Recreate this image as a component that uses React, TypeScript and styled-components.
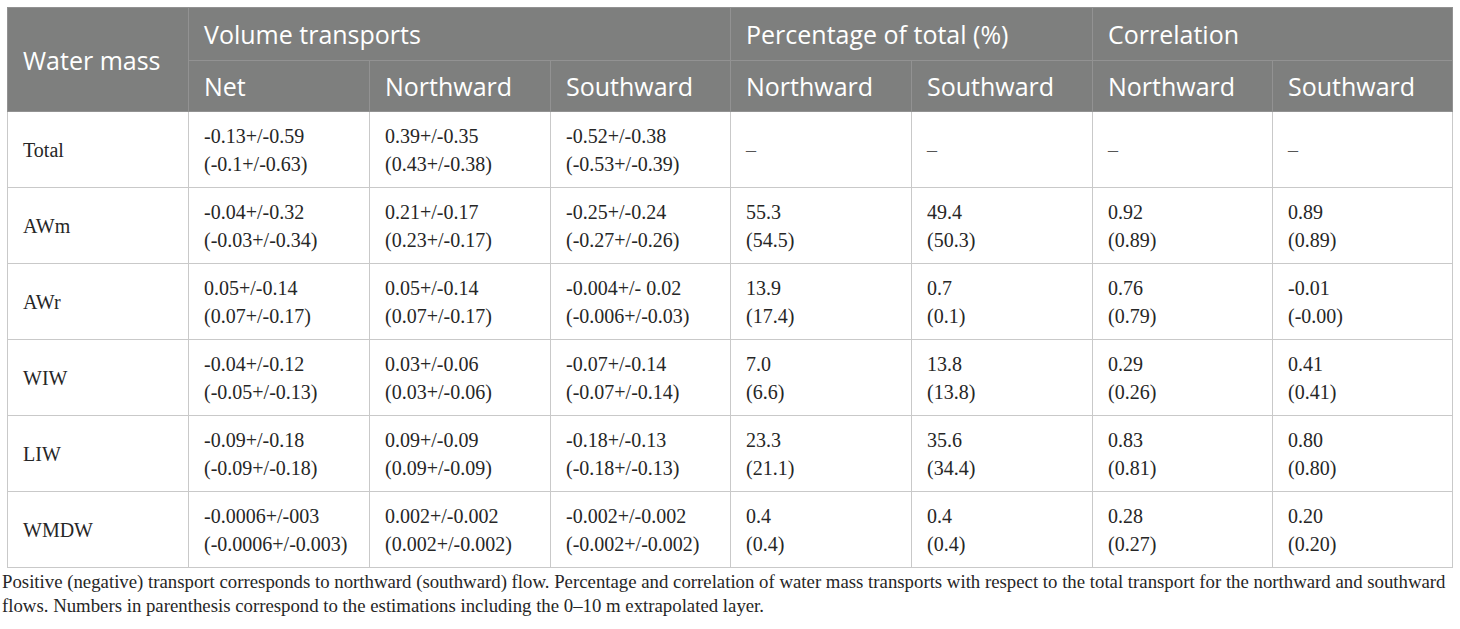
import React from 'react';
import styled, { createGlobalStyle } from 'styled-components';

const GlobalStyle = createGlobalStyle`
  html, body {
    margin: 0;
    padding: 0;
    background: #ffffff;
  }
`;

// column widths measured from the reference
const columnWidths = [181, 181, 181, 180, 181, 181, 180, 180];

type Row = {
  name: string;
  cells: [string, string][];
};

const rows: Row[] = [
  {
    name: 'Total',
    cells: [
      ['-0.13+/-0.59', '(-0.1+/-0.63)'],
      ['0.39+/-0.35', '(0.43+/-0.38)'],
      ['-0.52+/-0.38', '(-0.53+/-0.39)'],
      ['–', ''],
      ['–', ''],
      ['–', ''],
      ['–', ''],
    ],
  },
  {
    name: 'AWm',
    cells: [
      ['-0.04+/-0.32', '(-0.03+/-0.34)'],
      ['0.21+/-0.17', '(0.23+/-0.17)'],
      ['-0.25+/-0.24', '(-0.27+/-0.26)'],
      ['55.3', '(54.5)'],
      ['49.4', '(50.3)'],
      ['0.92', '(0.89)'],
      ['0.89', '(0.89)'],
    ],
  },
  {
    name: 'AWr',
    cells: [
      ['0.05+/-0.14', '(0.07+/-0.17)'],
      ['0.05+/-0.14', '(0.07+/-0.17)'],
      ['-0.004+/- 0.02', '(-0.006+/-0.03)'],
      ['13.9', '(17.4)'],
      ['0.7', '(0.1)'],
      ['0.76', '(0.79)'],
      ['-0.01', '(-0.00)'],
    ],
  },
  {
    name: 'WIW',
    cells: [
      ['-0.04+/-0.12', '(-0.05+/-0.13)'],
      ['0.03+/-0.06', '(0.03+/-0.06)'],
      ['-0.07+/-0.14', '(-0.07+/-0.14)'],
      ['7.0', '(6.6)'],
      ['13.8', '(13.8)'],
      ['0.29', '(0.26)'],
      ['0.41', '(0.41)'],
    ],
  },
  {
    name: 'LIW',
    cells: [
      ['-0.09+/-0.18', '(-0.09+/-0.18)'],
      ['0.09+/-0.09', '(0.09+/-0.09)'],
      ['-0.18+/-0.13', '(-0.18+/-0.13)'],
      ['23.3', '(21.1)'],
      ['35.6', '(34.4)'],
      ['0.83', '(0.81)'],
      ['0.80', '(0.80)'],
    ],
  },
  {
    name: 'WMDW',
    cells: [
      ['-0.0006+/-003', '(-0.0006+/-0.003)'],
      ['0.002+/-0.002', '(0.002+/-0.002)'],
      ['-0.002+/-0.002', '(-0.002+/-0.002)'],
      ['0.4', '(0.4)'],
      ['0.4', '(0.4)'],
      ['0.28', '(0.27)'],
      ['0.20', '(0.20)'],
    ],
  },
];

const Page = styled.div`
  padding: 7px 8px 0 2px;
`;

const Table = styled.table`
  margin-left: 5px;
  width: 1445px;
  table-layout: fixed;
  border-collapse: collapse;
`;

const HeadRow = styled.tr<{ $height: number }>`
  height: ${(p) => p.$height}px;
`;

const HeadCell = styled.th`
  background: #7e7f7e;
  color: #ffffff;
  font-family: 'Open Sans', 'Noto Sans', sans-serif;
  font-weight: 400;
  font-size: 25px;
  text-align: left;
  padding: 0 15px;
  border: 1px solid #929292;
  white-space: nowrap;
  vertical-align: middle;
`;

const BodyRow = styled.tr`
  height: 76px;
`;

const BodyCell = styled.td`
  font-family: 'Liberation Serif', 'Times New Roman', serif;
  font-size: 20px;
  line-height: 28px;
  color: #262626;
  padding: 0 15px;
  border: 1px solid #c9c9c9;
  vertical-align: middle;
  white-space: nowrap;
`;

const Dash = styled.span`
  color: #555555;
`;

const Caption = styled.p`
  margin: 2px 0 0 0;
  font-family: 'Liberation Serif', 'Times New Roman', serif;
  font-size: 18.8px;
  line-height: 24px;
  color: #262626;
  width: 1456px;
`;

const App: React.FC = () => {
  return (
    <>
      <GlobalStyle />
      <Page>
        <Table>
          <colgroup>
            {columnWidths.map((w, i) => (
              <col key={i} style={{ width: w }} />
            ))}
          </colgroup>
          <thead>
            <HeadRow $height={53}>
              <HeadCell rowSpan={2}>Water mass</HeadCell>
              <HeadCell colSpan={3}>Volume transports</HeadCell>
              <HeadCell colSpan={2}>Percentage of total (%)</HeadCell>
              <HeadCell colSpan={2}>Correlation</HeadCell>
            </HeadRow>
            <HeadRow $height={51}>
              <HeadCell>Net</HeadCell>
              <HeadCell>Northward</HeadCell>
              <HeadCell>Southward</HeadCell>
              <HeadCell>Northward</HeadCell>
              <HeadCell>Southward</HeadCell>
              <HeadCell>Northward</HeadCell>
              <HeadCell>Southward</HeadCell>
            </HeadRow>
          </thead>
          <tbody>
            {rows.map((row) => (
              <BodyRow key={row.name}>
                <BodyCell>{row.name}</BodyCell>
                {row.cells.map(([main, alt], i) => (
                  <BodyCell key={i}>
                    {main === '–' ? (
                      <Dash>–</Dash>
                    ) : (
                      <>
                        {main}
                        <br />
                        {alt}
                      </>
                    )}
                  </BodyCell>
                ))}
              </BodyRow>
            ))}
          </tbody>
        </Table>
        <Caption>
          Positive (negative) transport corresponds to northward (southward) flow. Percentage and correlation of water mass
          transports with respect to the total transport for the northward and southward flows. Numbers in parenthesis
          correspond to the estimations including the 0–10 m extrapolated layer.
        </Caption>
      </Page>
    </>
  );
};

export default App;
